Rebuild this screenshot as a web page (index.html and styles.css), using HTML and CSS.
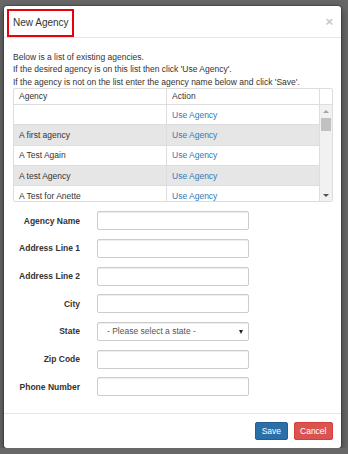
FILE: index.html
```html
<!DOCTYPE html>
<html lang="en">

<head>
    <meta charset="UTF-8">
    <meta name="viewport" content="width=device-width, initial-scale=1.0">
    <title>New Agency</title>
    <link rel="stylesheet" href="styles.css">
</head>

<body>
    <div class="modal">
        <div class="modal-header">
            <h4 class="modal-title">New Agency</h4>
            <button type="button" class="close">&times;</button>
        </div>

        <div class="modal-body">
            <p class="intro">
                Below is a list of existing agencies.<br>
                If the desired agency is on this list then click 'Use Agency'.<br>
                If the agency is not on the list enter the agency name below and click 'Save'.
            </p>

            <div class="agency-table">
                <div class="table-head">
                    <div class="cell">Agency</div>
                    <div class="cell">Action</div>
                    <div class="cell bar-cell"></div>
                </div>
                <div class="table-body">
                    <div class="rows">
                        <div class="row">
                            <div class="cell"></div>
                            <div class="cell"><a href="#">Use Agency</a></div>
                        </div>
                        <div class="row striped">
                            <div class="cell">A first agency</div>
                            <div class="cell"><a href="#">Use Agency</a></div>
                        </div>
                        <div class="row">
                            <div class="cell">A Test Again</div>
                            <div class="cell"><a href="#">Use Agency</a></div>
                        </div>
                        <div class="row striped">
                            <div class="cell">A test Agency</div>
                            <div class="cell"><a href="#">Use Agency</a></div>
                        </div>
                        <div class="row">
                            <div class="cell">A Test for Anette</div>
                            <div class="cell"><a href="#">Use Agency</a></div>
                        </div>
                    </div>
                    <div class="scrollbar">
                        <span class="arrow up"></span>
                        <span class="thumb"></span>
                        <span class="track"></span>
                        <span class="arrow down"></span>
                    </div>
                </div>
            </div>

            <form class="agency-form">
                <label for="agencyName">Agency Name</label>
                <input type="text" id="agencyName">

                <label for="address1">Address Line 1</label>
                <input type="text" id="address1">

                <label for="address2">Address Line 2</label>
                <input type="text" id="address2">

                <label for="city">City</label>
                <input type="text" id="city">

                <label for="state">State</label>
                <div class="select-wrap">
                    <select id="state">
                        <option>- Please select a state -</option>
                    </select>
                </div>

                <label for="zip">Zip Code</label>
                <input type="text" id="zip">

                <label for="phone">Phone Number</label>
                <input type="text" id="phone">
            </form>
        </div>

        <div class="modal-footer">
            <button type="button" class="btn btn-primary">Save</button>
            <button type="button" class="btn btn-danger">Cancel</button>
        </div>
    </div>
</body>

</html>
```

FILE: styles.css
```css
:root {
    --backdrop: #686868;
    --text-color: #333333;
    --border: #dddddd;
    --input-border: #cccccc;
    --stripe: #e6e6e6;
    --link: #337ab7;
    --primary: #2a6fa8;
    --danger: #d9534f;
}

* {
    box-sizing: border-box;
}

body {
    margin: 0;
    background-color: var(--backdrop);
    font-family: 'Liberation Sans', Arial, sans-serif;
    font-size: 8.5px;
    color: var(--text-color);
}

.modal {
    width: 337px;
    margin: 6px 0 0 4px;
    background-color: #ffffff;
    border-radius: 3px;
    box-shadow: 0 0 0 1px rgba(0, 0, 0, 0.2), 0 3px 9px rgba(0, 0, 0, 0.5);
}

.modal-header {
    display: flex;
    justify-content: space-between;
    height: 32px;
    border-bottom: 1px solid #e5e5e5;
}

.modal-title {
    margin: 3px 0 0 3px;
    height: 28px;
    padding: 0 3px 0 4px;
    border: 2px solid #e8000b;
    font-size: 10px;
    font-weight: normal;
    line-height: 24px;
}

.close {
    margin: 8px 8px 0 0;
    padding: 0;
    height: 16px;
    border: none;
    background: none;
    color: #c8c8c8;
    font-family: 'Liberation Sans', Arial, sans-serif;
    font-size: 13px;
    font-weight: bold;
    line-height: 16px;
}

.modal-body {
    padding: 13px 8px 16.8px 9px;
}

.intro {
    margin: 0;
    line-height: 12.4px;
}

.agency-table {
    border: 1px solid var(--border);
    border-radius: 2px;
}

.table-head {
    display: flex;
    height: 16px;
    border-bottom: 1px solid var(--border);
}

.cell {
    width: 153px;
    padding: 0 5px;
    border-right: 1px solid var(--border);
    white-space: nowrap;
    display: flex;
    align-items: center;
}

.table-head .cell {
    line-height: 15px;
}

.table-head .bar-cell {
    width: 12px;
    border-right: none;
}

.table-body {
    display: flex;
    height: 96px;
}

.rows {
    width: 306px;
    overflow: hidden;
}

.row {
    display: flex;
    height: 20.25px;
    border-bottom: 1px solid var(--border);
}

.row.striped {
    background-color: var(--stripe);
}

.row a {
    color: var(--link);
    text-decoration: none;
}

.scrollbar {
    width: 12px;
    display: flex;
    flex-direction: column;
    align-items: center;
    background-color: #f1f1f1;
}

.arrow {
    height: 12px;
    width: 10px;
    display: flex;
    justify-content: center;
    align-items: center;
}

.arrow::before {
    content: '';
    border-left: 3px solid transparent;
    border-right: 3px solid transparent;
}

.arrow.up::before {
    border-bottom: 3px solid #a3a3a3;
}

.arrow.down::before {
    border-top: 3px solid #505050;
}

.thumb {
    width: 10px;
    height: 13px;
    margin-top: 1px;
    background-color: #c1c1c1;
}

.track {
    flex: 1;
}

.agency-form {
    display: grid;
    grid-template-columns: 67px 152px;
    grid-auto-rows: 19px;
    column-gap: 17px;
    row-gap: 8.67px;
    margin-top: 9px;
}

.agency-form label {
    align-self: center;
    text-align: right;
    font-weight: bold;
    white-space: nowrap;
}

.agency-form input,
.agency-form select {
    width: 100%;
    height: 19px;
    margin: 0;
    border: 1px solid var(--input-border);
    border-radius: 2px;
    background-color: #ffffff;
    box-shadow: inset 0 1px 1px rgba(0, 0, 0, 0.075);
    font-family: 'Liberation Sans', Arial, sans-serif;
    font-size: 8.5px;
    color: #555555;
}

.select-wrap {
    position: relative;
}

.agency-form select {
    appearance: none;
    padding: 0 0 0 9px;
}

.select-wrap::after {
    content: '';
    position: absolute;
    right: 6px;
    top: 8px;
    border-left: 2.5px solid transparent;
    border-right: 2.5px solid transparent;
    border-top: 4px solid #222222;
}

.modal-footer {
    display: flex;
    justify-content: flex-end;
    gap: 6px;
    padding: 8px 8px 8px;
    border-top: 1px solid #e5e5e5;
}

.btn {
    height: 18px;
    padding: 0 5.5px;
    border: 1px solid transparent;
    border-radius: 2px;
    color: #ffffff;
    font-family: 'Liberation Sans', Arial, sans-serif;
    font-size: 8.5px;
    line-height: 16px;
}

.btn-primary {
    background-color: var(--primary);
    border-color: #245f91;
}

.btn-danger {
    background-color: var(--danger);
    border-color: #d43f3a;
}
```
